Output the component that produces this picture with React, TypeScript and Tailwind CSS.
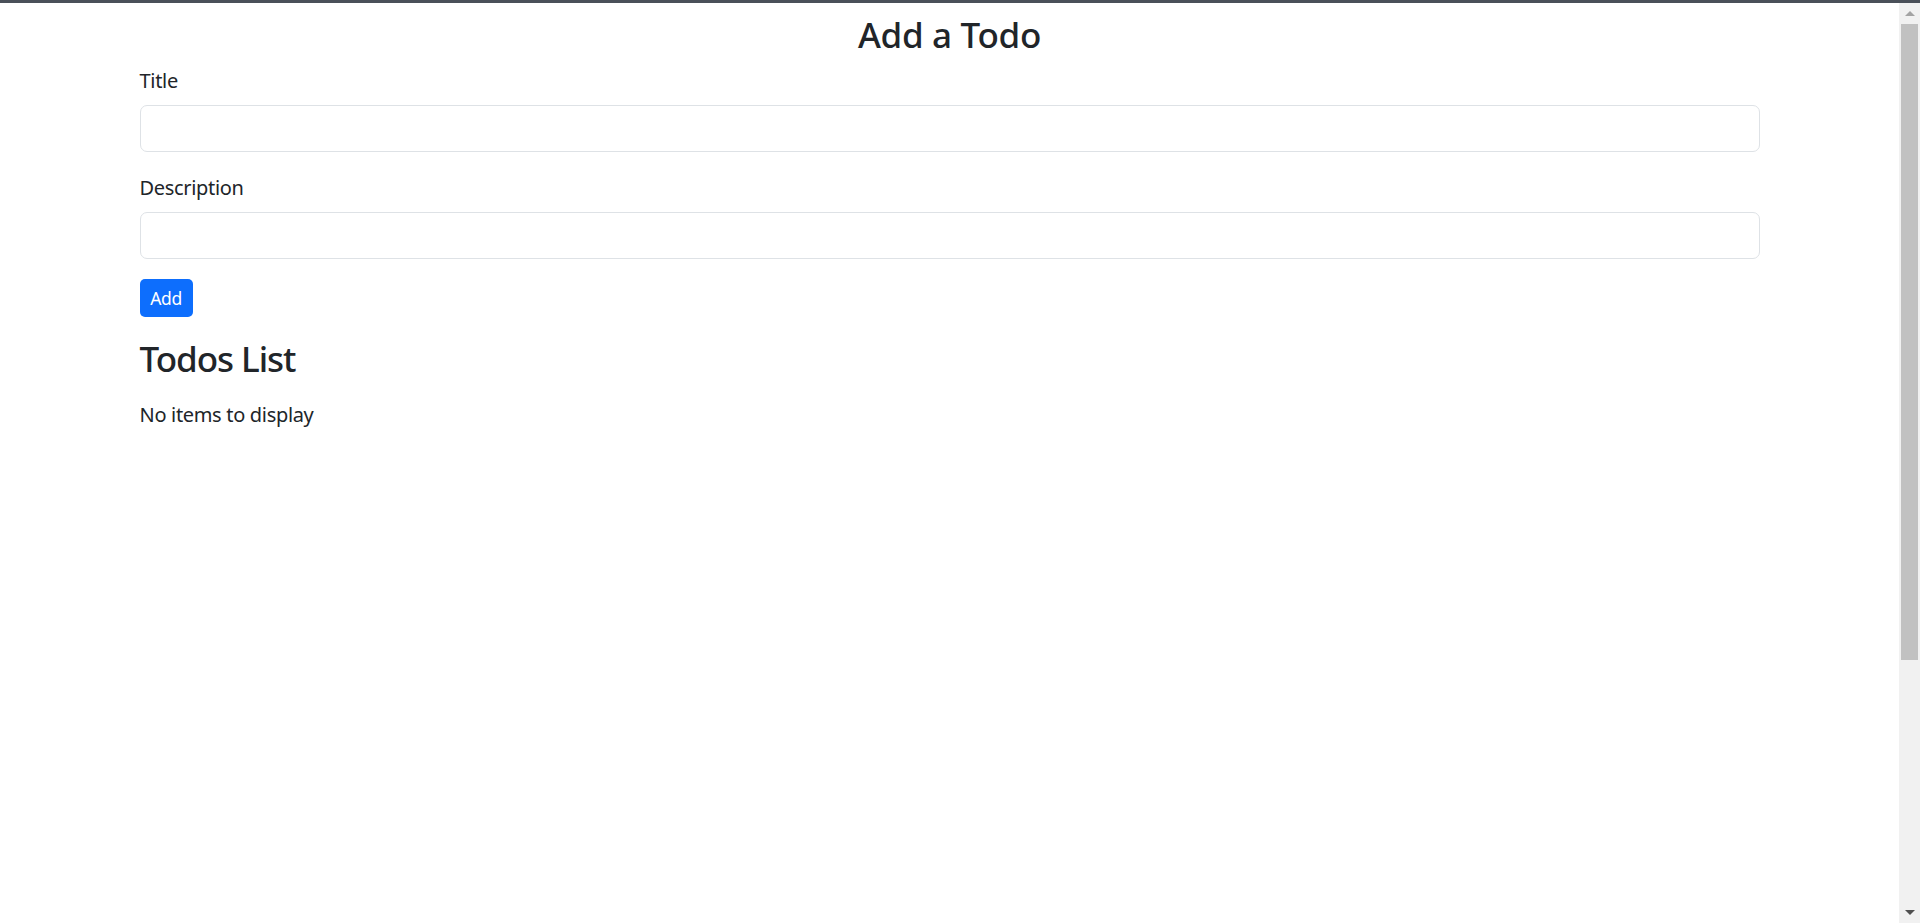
import { useState, FormEvent } from "react";

type Todo = { sno: number; title: string; desc: string };

function FakeScrollbar() {
  return (
    <div className="w-[21px] shrink-0 bg-[#f1f1f1] flex flex-col items-center">
      <div className="h-[21px] flex items-center justify-center">
        <div className="w-0 h-0 border-l-[5px] border-r-[5px] border-b-[5px] border-l-transparent border-r-transparent border-b-[#a3a3a3]" />
      </div>
      <div className="w-[17px] h-[636px] bg-[#c1c1c1]" />
      <div className="flex-1" />
      <div className="h-[21px] flex items-center justify-center">
        <div className="w-0 h-0 border-l-[5px] border-r-[5px] border-t-[5px] border-l-transparent border-r-transparent border-t-[#505050]" />
      </div>
    </div>
  );
}

export default function App() {
  const [title, setTitle] = useState("");
  const [desc, setDesc] = useState("");
  const [todos, setTodos] = useState<Todo[]>([]);

  const handleSubmit = (e: FormEvent) => {
    e.preventDefault();
    if (!title || !desc) return;
    const sno = todos.length ? todos[todos.length - 1].sno + 1 : 1;
    setTodos([...todos, { sno, title, desc }]);
    setTitle("");
    setDesc("");
  };

  return (
    <div className="h-[923px] flex flex-col bg-white text-[#212529] font-['Noto_Sans',sans-serif] tracking-[-0.02em] overflow-hidden">
      {/* window edge */}
      <div className="h-[3px] shrink-0 bg-[#4a5059]" />

      <div className="flex flex-1 min-h-0">
        <main className="flex-1">
          <div className="max-w-[1650px] mx-auto px-[15px]">
            <h3 className="pt-[11px] mb-[10px] text-center text-[35px] leading-[41px] font-medium">
              Add a Todo
            </h3>

            <form onSubmit={handleSubmit}>
              <div className="mb-[20px]">
                <label htmlFor="title" className="block pt-[1px] mb-[9px] text-[20px] leading-[30px]">
                  Title
                </label>
                <input
                  id="title"
                  type="text"
                  value={title}
                  onChange={(e) => setTitle(e.target.value)}
                  className="block w-full h-[47px] px-[15px] text-[20px] border border-[#dee2e6] rounded-[7px] outline-none focus:border-[#86b7fe]"
                />
              </div>
              <div className="mb-[20px]">
                <label htmlFor="desc" className="block pt-[1px] mb-[9px] text-[20px] leading-[30px]">
                  Description
                </label>
                <input
                  id="desc"
                  type="text"
                  value={desc}
                  onChange={(e) => setDesc(e.target.value)}
                  className="block w-full h-[47px] px-[15px] text-[20px] border border-[#dee2e6] rounded-[7px] outline-none focus:border-[#86b7fe]"
                />
              </div>
              <button
                type="submit"
                className="h-[38px] w-[53px] bg-[#0d6efd] text-white text-[17.5px] leading-[26px] rounded-[5px] hover:bg-[#0b5ed7]"
              >
                Add
              </button>
            </form>

            <h3 className="mt-[21px] mb-[20px] text-[35px] leading-[42px] font-medium tracking-[-0.03em]">
              Todos List
            </h3>

            {todos.length === 0 ? (
              <p className="text-[20px] leading-[30px]">No items to display</p>
            ) : (
              todos.map((t) => (
                <div key={t.sno} className="mb-[20px]">
                  <h4 className="text-[24px] font-medium">{t.title}</h4>
                  <p className="text-[20px] leading-[30px]">{t.desc}</p>
                </div>
              ))
            )}
          </div>
        </main>
        <FakeScrollbar />
      </div>
    </div>
  );
}
